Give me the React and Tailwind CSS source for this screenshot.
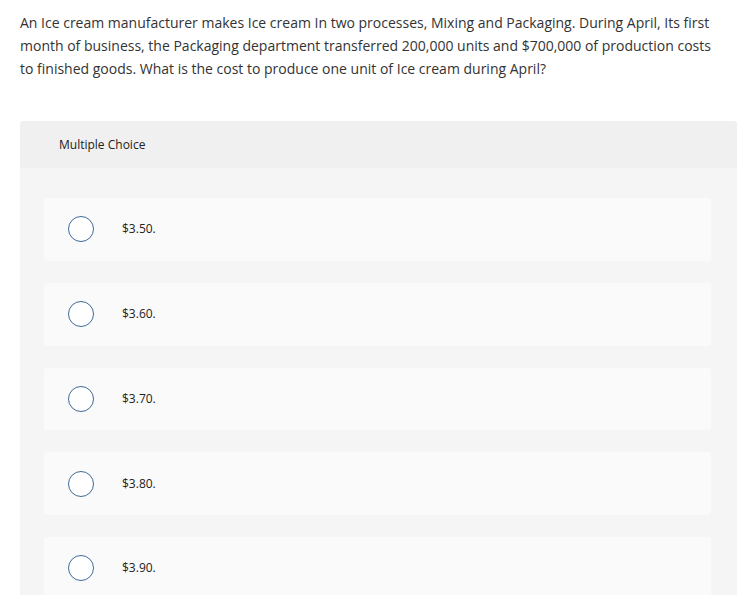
export default function App() {
  const opts = ["$3.50.", "$3.60.", "$3.70.", "$3.80.", "$3.90."];
  return (
    <div className="bg-white w-[755px] h-[595px] overflow-hidden">
      <div className="pt-[11px] pl-[20px] pr-[34px] text-[14px] leading-[23px] text-[#333]" style={{ fontFamily: "'Open Sans', sans-serif" }}>
        An Ice cream manufacturer makes Ice cream In two processes, Mixing and Packaging. During April, Its first month of business, the Packaging department transferred 200,000 units and $700,000 of production costs to finished goods. What is the cost to produce one unit of Ice cream during April?
      </div>
      <div className="mt-[41px] ml-[20px] w-[717px] bg-[#f5f5f5] rounded-t-[3px]" style={{ fontFamily: "'Open Sans', sans-serif" }}>
        <div className="h-[47px] bg-[#f0f0f0] rounded-t-[3px] pl-[39px] pt-[15px] text-[12px] text-[#222]">Multiple Choice</div>
        <div className="pt-[30px] pl-[24px] pr-[26px] flex flex-col gap-[22px] pb-[20px]">
          {opts.map((o) => (
            <div key={o} className="h-[62.75px] bg-[#fafafa] rounded-[3px] flex items-center pl-[24px]">
              <div className="w-[26px] h-[26px] rounded-full border-[1.5px] border-[#3d6a99] bg-white shrink-0"></div>
              <div className="ml-[28px] text-[12px] text-[#222]">{o}</div>
            </div>
          ))}
        </div>
      </div>
    </div>
  );
}
